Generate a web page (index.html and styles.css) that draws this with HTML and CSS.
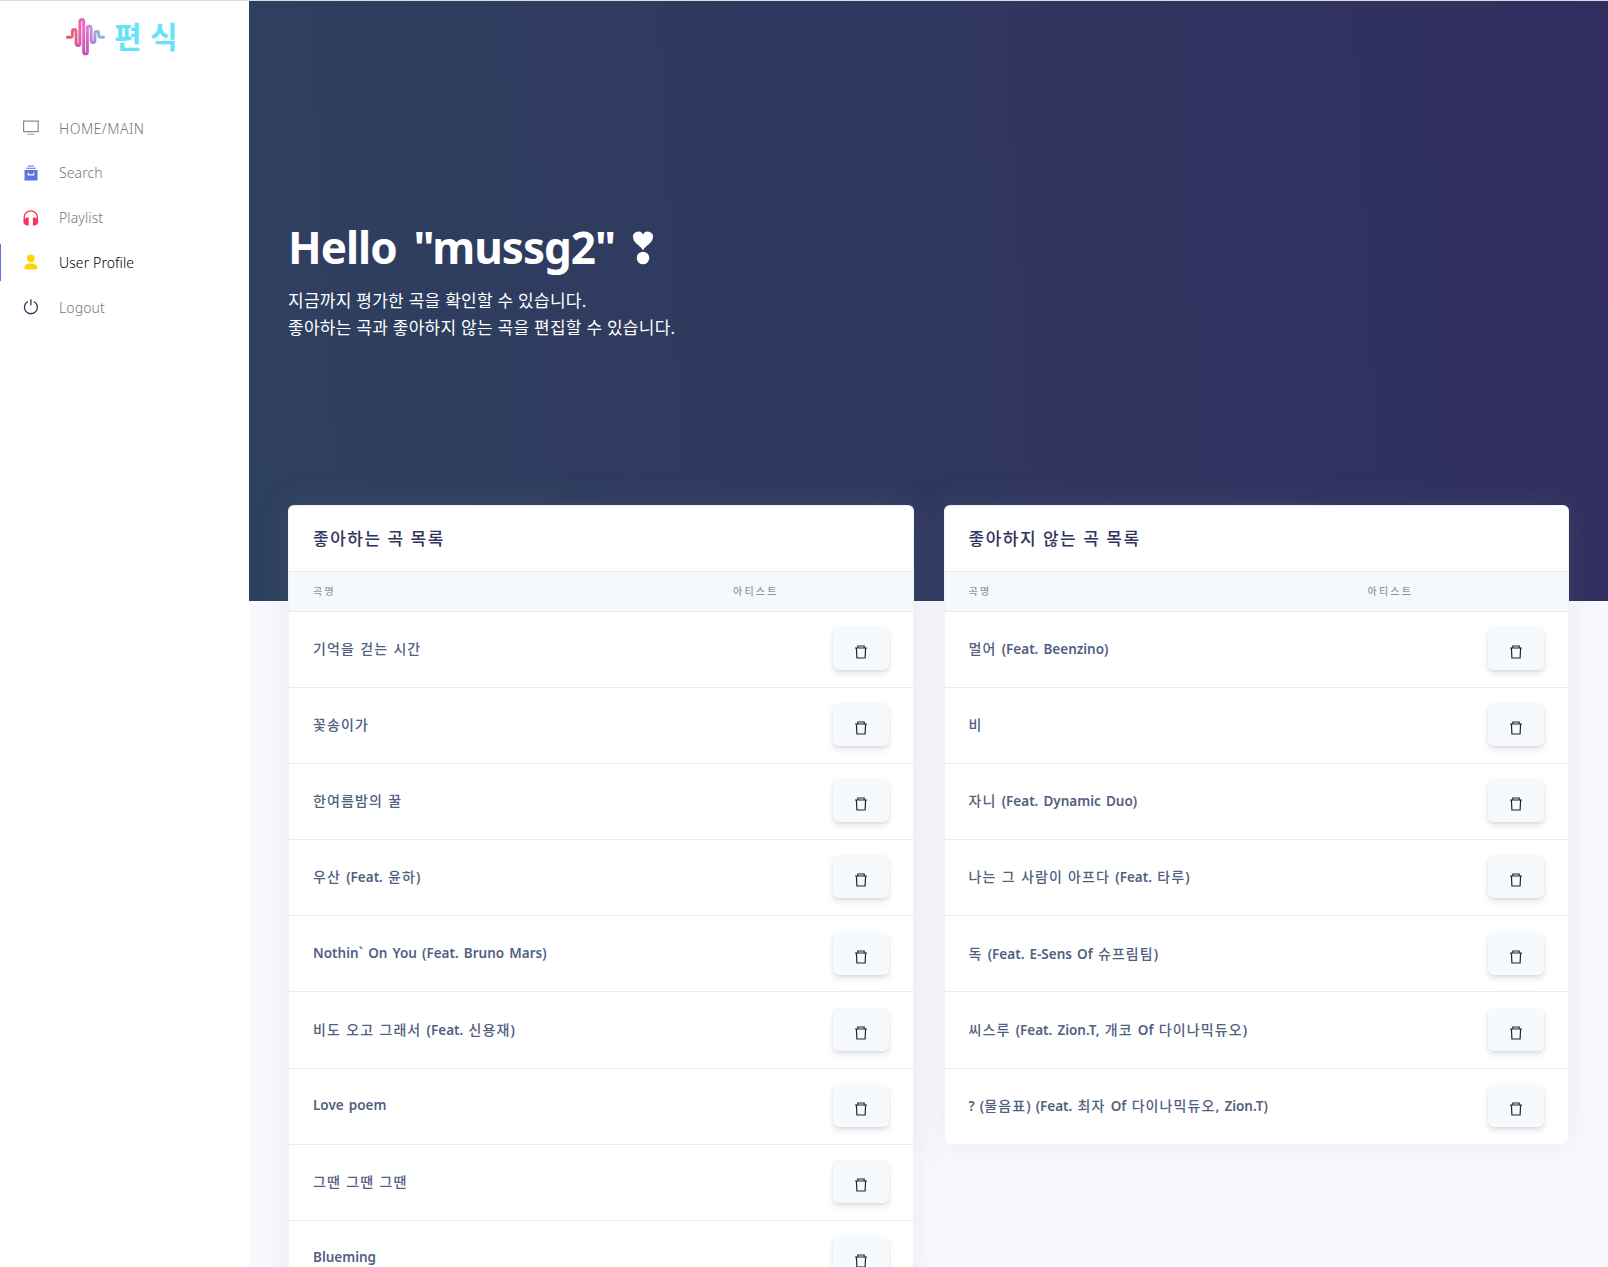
FILE: index.html
```html
<!DOCTYPE html>
<html lang="ko">
<head>
<meta charset="utf-8">
<title>편식 - User Profile</title>
<link rel="stylesheet" href="styles.css">
</head>
<body>
<svg class="defs" width="0" height="0" aria-hidden="true">
  <symbol id="trash" viewBox="0 0 12 14"><path d="M0 3H12M2.800 3V1H9.200V3M1.400 3L1.900 13H10.100L10.600 3" fill="none" stroke="#212529" stroke-width="1.200"/></symbol>
</svg>
<div class="layout">
  <aside class="sidebar">
    <a class="brand">
      <svg width="42" height="40" viewBox="0 0 42 40" fill="none" stroke-linecap="round" stroke-linejoin="round">
        <defs>
          <linearGradient id="wave" gradientUnits="userSpaceOnUse" x1="1" y1="0" x2="40" y2="0"><stop offset="0" stop-color="#e8505f"/><stop offset=".25" stop-color="#e8698a"/><stop offset=".4" stop-color="#f65cc0"/><stop offset=".55" stop-color="#d878d4"/><stop offset=".68" stop-color="#c09ae8"/><stop offset=".82" stop-color="#94aee2"/><stop offset="1" stop-color="#62cdec"/></linearGradient>
          <linearGradient id="shade" gradientUnits="userSpaceOnUse" x1="0" y1="14" x2="0" y2="39"><stop offset="0" stop-color="#803080" stop-opacity="0"/><stop offset="1" stop-color="#803080" stop-opacity=".4"/></linearGradient>
        </defs>
        <path d="M2.500 20.300H5.500Q7.400 20.300 7.400 18V14.400a1.850 1.900 0 0 1 3.700 0V26.600a1.900 1.900 0 0 0 3.800 0V4.400a1.900 1.900 0 0 1 3.800 0V35a1.850 1.900 0 0 0 3.700 0V11a1.900 1.900 0 0 1 3.800 0V23.600a1.850 1.900 0 0 0 3.700 0V16.400a1.900 1.900 0 0 1 3.800 0V18Q33.700 20.300 35.800 20.300H38.500" stroke="url(#wave)" stroke-width="2.900"/>
        <path d="M11.100 16V26.600a1.900 1.900 0 0 0 3.800 0V16M18.700 16V35a1.850 1.900 0 0 0 3.700 0V16M26.200 14V23.600a1.850 1.900 0 0 0 3.700 0V20" stroke="url(#shade)" stroke-width="2.900"/>
      </svg>
      <span class="brand-name">편 식</span>
    </a>
    <nav class="menu">
      <a class="item"><svg width="16" height="16" viewBox="0 0 16 16"><path d="M.6 1.100H15.200V11.700H.6Z" fill="none" stroke="#8d8a96" stroke-width="1.200"/><path d="M4.500 14.200H11.500" stroke="#a9a9ae" stroke-width="1.200"/></svg><span class="caps">HOME/MAIN</span></a>
      <a class="item"><svg width="16" height="16" viewBox="0 0 16 16" fill="#5e72e4"><path d="M5 .5H11V1.500H5ZM3 2.700H13V3.700H3Z"/><path fill-rule="evenodd" d="M1.500 5H14.500V15.500H1.500ZM4.700 7.500V10.500H11.300V7.500H10.200V9.300H5.800V7.500Z"/></svg><span>Search</span></a>
      <a class="item"><svg width="16" height="16" viewBox="0 0 16 16" fill="#f5365c"><path d="M1.200 10V7.500a6.600 6.700 0 0 1 13.200 0V10" fill="none" stroke="#f5365c" stroke-width="1.200"/><path d="M5.700 7.500V15.500H4.200Q.3 15 .3 11.500T4 7.500ZM9.900 7.500V15.500H11.400Q15.300 15 15.300 11.500T11.600 7.500Z"/></svg><span>Playlist</span></a>
      <a class="item active"><svg width="16" height="16" viewBox="0 0 16 16" fill="#ffd600"><circle cx="7.900" cy="4.300" r="3.900"/><path d="M1.400 13.500C1.400 11 4 9.500 7.900 9.500S14.400 11 14.400 13.500Q14.400 15.500 12.400 15.500H3.400Q1.400 15.500 1.400 13.500Z"/></svg><span>User Profile</span></a>
      <a class="item"><svg width="16" height="16" viewBox="0 0 16 16" fill="none" stroke="#32325d" stroke-width="1.300"><path d="M7.900 .3V6.300M4.900 2.500A6.500 6.500 0 1 0 10.900 2.500"/></svg><span>Logout</span></a>
    </nav>
  </aside>
  <main class="content">
    <header class="hero">
      <h1>Hello "mussg2" <svg class="heart" width="22" height="34" viewBox="0 0 22 34" fill="#fff"><path d="M11 19.500C9.800 15 1 12.800 1 6A5.200 5.200 0 0 1 11 3.800A5.200 5.200 0 0 1 21 6C21 12.800 12.200 15 11 19.500Z"/><circle cx="11" cy="27" r="6.300"/></svg></h1>
      <p>지금까지 평가한 곡을 확인할 수 있습니다.</p>
      <p>좋아하는 곡과 좋아하지 않는 곡을 편집할 수 있습니다.</p>
    </header>
    <div class="cards">
      <section class="card liked">
        <h2>좋아하는 곡 목록</h2>
        <div class="thead"><span>곡명</span><span>아티스트</span></div>
        <div class="row"><span>기억을 걷는 시간</span><button><svg width="12" height="14"><use href="#trash"/></svg></button></div>
        <div class="row"><span>꽃송이가</span><button><svg width="12" height="14"><use href="#trash"/></svg></button></div>
        <div class="row"><span>한여름밤의 꿀</span><button><svg width="12" height="14"><use href="#trash"/></svg></button></div>
        <div class="row"><span>우산 <i>(Feat.</i> 윤하<i>)</i></span><button><svg width="12" height="14"><use href="#trash"/></svg></button></div>
        <div class="row"><span><i>Nothin` On You (Feat. Bruno Mars)</i></span><button><svg width="12" height="14"><use href="#trash"/></svg></button></div>
        <div class="row"><span>비도 오고 그래서 <i>(Feat.</i> 신용재<i>)</i></span><button><svg width="12" height="14"><use href="#trash"/></svg></button></div>
        <div class="row"><span><i>Love poem</i></span><button><svg width="12" height="14"><use href="#trash"/></svg></button></div>
        <div class="row"><span>그땐 그땐 그땐</span><button><svg width="12" height="14"><use href="#trash"/></svg></button></div>
        <div class="row"><span><i>Blueming</i></span><button><svg width="12" height="14"><use href="#trash"/></svg></button></div>
      </section>
      <section class="card disliked">
        <h2>좋아하지 않는 곡 목록</h2>
        <div class="thead"><span>곡명</span><span>아티스트</span></div>
        <div class="row"><span>멀어 <i>(Feat. Beenzino)</i></span><button><svg width="12" height="14"><use href="#trash"/></svg></button></div>
        <div class="row"><span>비</span><button><svg width="12" height="14"><use href="#trash"/></svg></button></div>
        <div class="row"><span>자니 <i>(Feat. Dynamic Duo)</i></span><button><svg width="12" height="14"><use href="#trash"/></svg></button></div>
        <div class="row"><span>나는 그 사람이 아프다 <i>(Feat.</i> 타루<i>)</i></span><button><svg width="12" height="14"><use href="#trash"/></svg></button></div>
        <div class="row"><span>독 <i>(Feat. E-Sens Of</i> 슈프림팀<i>)</i></span><button><svg width="12" height="14"><use href="#trash"/></svg></button></div>
        <div class="row"><span>씨스루 <i>(Feat. Zion.T,</i> 개코 <i>Of</i> 다이나믹듀오<i>)</i></span><button><svg width="12" height="14"><use href="#trash"/></svg></button></div>
        <div class="row"><span><i>? (</i>물음표<i>) (Feat.</i> 최자 <i>Of</i> 다이나믹듀오<i>, Zion.T)</i></span><button><svg width="12" height="14"><use href="#trash"/></svg></button></div>
      </section>
    </div>
  </main>
</div>
</body>
</html>
```
FILE: styles.css
```css
* { box-sizing: border-box; }
body {
  margin: 0;
  height: 1267px;
  overflow: hidden;
  background: #f8f9fe;
  font-family: "Noto Sans", "Noto Sans CJK KR", sans-serif;
}
.defs { display: block; height: 0; }
.layout { display: flex; height: 1267px; border-top: 1px solid #dadce0; }
.sidebar { width: 249px; flex: none; background: #fff; z-index: 1; }
.brand { display: flex; align-items: center; height: 72px; padding-left: 65px; gap: 7px; }
.brand-name { padding-bottom: 4px; color: #66e3f4; font: 700 30px/40px "Noto Sans CJK KR", sans-serif; white-space: nowrap; }
.menu { padding-top: 36.5px; }
.item { display: flex; align-items: center; height: 37px; margin-bottom: 7.8px; padding-left: 21.5px; gap: 20.5px; border-left: 1px solid transparent; color: #777; font-size: 14px; font-weight: 300; letter-spacing: .1px; }
.item.active { border-left-color: #5e72e4; color: #000; }
.item .caps { letter-spacing: .5px; }
.content { flex: 1; min-width: 0; }
.hero { height: 600px; padding: 213px 39px 0; color: #fff; background: linear-gradient(87deg, #2e405f, #312e5f); }
.hero h1 { margin: 0 0 6px; height: 67px; font-size: 44px; line-height: 66px; font-weight: 700; letter-spacing: -1px; word-spacing: 6.5px; white-space: nowrap; }
.heart { vertical-align: -1px; }
.hero p { margin: 0; font-size: 17px; line-height: 27px; font-weight: 400; letter-spacing: .26px; white-space: nowrap; }
.cards { display: grid; grid-template-columns: 1fr 1fr; gap: 30px; align-items: start; margin-top: -96px; padding: 0 39px; }
.card { background: #fff; border: 1px solid rgba(0, 0, 0, .05); border-radius: 6px; box-shadow: 0 0 32px rgba(136, 152, 170, .15); }
.card h2 { margin: 0; height: 65px; padding: 0 24px; font-size: 17px; line-height: 66px; font-weight: 500; color: #32325d; letter-spacing: 1.5px; }
.thead { display: grid; height: 41px; align-items: center; padding: 0 0 3px 24px; border-top: 1px solid #e9ecef; border-bottom: 1px solid #e9ecef; background: #f6f9fc; color: #8898aa; font-size: 10px; font-weight: 500; letter-spacing: 2.2px; }
.liked .thead { grid-template-columns: 420px 1fr; }
.disliked .thead { grid-template-columns: 399px 1fr; }
.row { display: flex; align-items: center; justify-content: space-between; height: 76.1px; padding: 0 24px 1.8px; border-bottom: 1px solid #e9ecef; color: #525f7f; font-size: 14px; font-weight: 500; letter-spacing: 1.1px; word-spacing: .5px; white-space: nowrap; }
.row:last-child { height: 75.1px; border-bottom: 0; }
.row span { padding-bottom: 1px; }
.row i { font-style: normal; font-size: 13.5px; font-weight: 600; letter-spacing: 0; word-spacing: 1.6px; }
.row button { display: flex; justify-content: center; width: 56px; height: 43px; padding: 18px 0 0; border: 0; border-radius: 6px; background: #f7fafc; box-shadow: 0 4px 6px rgba(50, 50, 93, .11), 0 1px 3px rgba(0, 0, 0, .08); }
```
